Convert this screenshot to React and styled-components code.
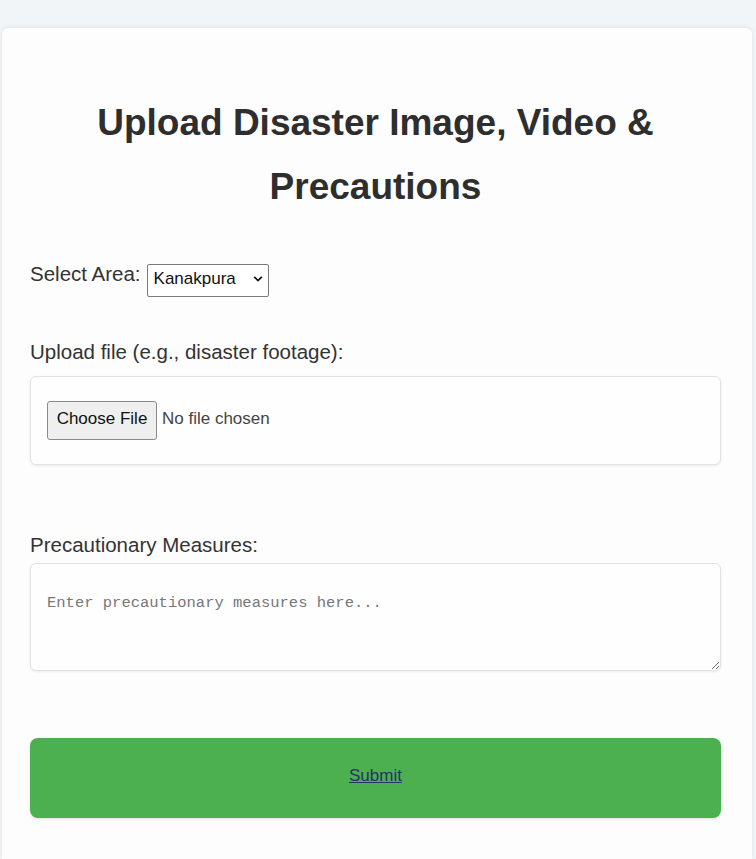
import React from "react";
import styled, { createGlobalStyle } from "styled-components";

const GlobalStyle = createGlobalStyle`
  html, body {
    margin: 0;
    padding: 0;
    background: #f2f5f8;
    font-family: "Liberation Sans", Arial, sans-serif;
  }
`;

const Page = styled.div`
  padding-top: 28px;
  min-height: 100vh;
  box-sizing: border-box;
`;

const Card = styled.div`
  margin: 0 4px 0 2px;
  min-height: 831px;
  box-sizing: border-box;
  padding: 63px 31px 0 28px;
  background: #fdfdfd;
  border-radius: 6px 6px 0 0;
  box-shadow: 0 -1px 4px rgba(0, 0, 0, 0.08);
`;

const Title = styled.h1`
  margin: 0;
  font-size: 37px;
  line-height: 64px;
  font-weight: 700;
  color: #2e2e2e;
  text-align: center;
`;

const Row = styled.div`
  display: flex;
  align-items: flex-start;
  gap: 6px;
  margin-top: ${(p) => p.$top}px;
`;

const Label = styled.label`
  display: block;
  font-size: 20.5px;
  line-height: 30px;
  color: #333;
  margin-top: ${(p) => p.$top || 0}px;
  margin-bottom: ${(p) => p.$bottom || 0}px;
`;

const SelectWrap = styled.div`
  position: relative;
  margin-top: 5px;
`;

const Select = styled.select`
  appearance: none;
  width: 122px;
  height: 33px;
  box-sizing: border-box;
  padding: 0 24px 5px 6px;
  border: 1px solid #7a7a7a;
  border-radius: 2px;
  background: #fff;
  font-family: inherit;
  font-size: 17px;
  color: #111;
`;

const Chevron = styled.svg`
  position: absolute;
  right: 6px;
  top: 11px;
  width: 10px;
  height: 8px;
  pointer-events: none;
`;

const FileBox = styled.div`
  display: flex;
  align-items: center;
  gap: 5px;
  padding: 24px 16px;
  border: 1px solid #e2e2e2;
  border-radius: 6px;
  background: #fefefe;
  box-shadow: 0 1px 3px rgba(0, 0, 0, 0.08);
`;

const ChooseButton = styled.button`
  height: 39px;
  width: 110px;
  padding: 0 0 3px;
  border: 1px solid #8a8a8a;
  border-radius: 3px;
  background: #efefef;
  font-family: inherit;
  font-size: 17px;
  color: #111;
`;

const FileStatus = styled.span`
  font-size: 17px;
  color: #444;
  padding-bottom: 3px;
`;

const TextArea = styled.textarea`
  display: block;
  width: 100%;
  height: 108px;
  box-sizing: border-box;
  padding: 30px 16px;
  border: 1px solid #e2e2e2;
  border-radius: 6px;
  background: #fefefe;
  box-shadow: 0 1px 3px rgba(0, 0, 0, 0.08);
  font-family: "Liberation Mono", "DejaVu Sans Mono", monospace;
  font-size: 15.5px;
  color: #333;

  &::placeholder {
    color: #777;
  }
`;

const SubmitButton = styled.button`
  display: block;
  width: 100%;
  height: 80px;
  margin-top: 67px;
  padding: 0 0 4px;
  border: none;
  border-radius: 8px;
  background: #4caf50;
  box-shadow: 0 1px 3px rgba(0, 0, 0, 0.12);
  font-family: inherit;
  font-size: 17px;
  color: #2a316b;
  text-decoration: underline;
  cursor: pointer;
`;

export default function App() {
  return (
    <>
      <GlobalStyle />
      <Page>
        <Card>
          <Title>Upload Disaster Image, Video &amp; Precautions</Title>
          <Row $top={40}>
            <Label htmlFor="area">Select Area:</Label>
            <SelectWrap>
              <Select id="area" defaultValue="Kanakpura">
                <option>Kanakpura</option>
                <option>Ramanagara</option>
                <option>Channapatna</option>
              </Select>
              <Chevron viewBox="0 0 10 8">
                <path d="M1.2 1.8 L5 5.6 L8.8 1.8" fill="none" stroke="#111" strokeWidth="1.8" />
              </Chevron>
            </SelectWrap>
          </Row>
          <Label $top={40} $bottom={9}>Upload file (e.g., disaster footage):</Label>
          <FileBox>
            <ChooseButton type="button">Choose File</ChooseButton>
            <FileStatus>No file chosen</FileStatus>
          </FileBox>
          <Label $top={65} $bottom={3}>Precautionary Measures:</Label>
          <TextArea placeholder="Enter precautionary measures here..." />
          <SubmitButton type="submit">Submit</SubmitButton>
        </Card>
      </Page>
    </>
  );
}
